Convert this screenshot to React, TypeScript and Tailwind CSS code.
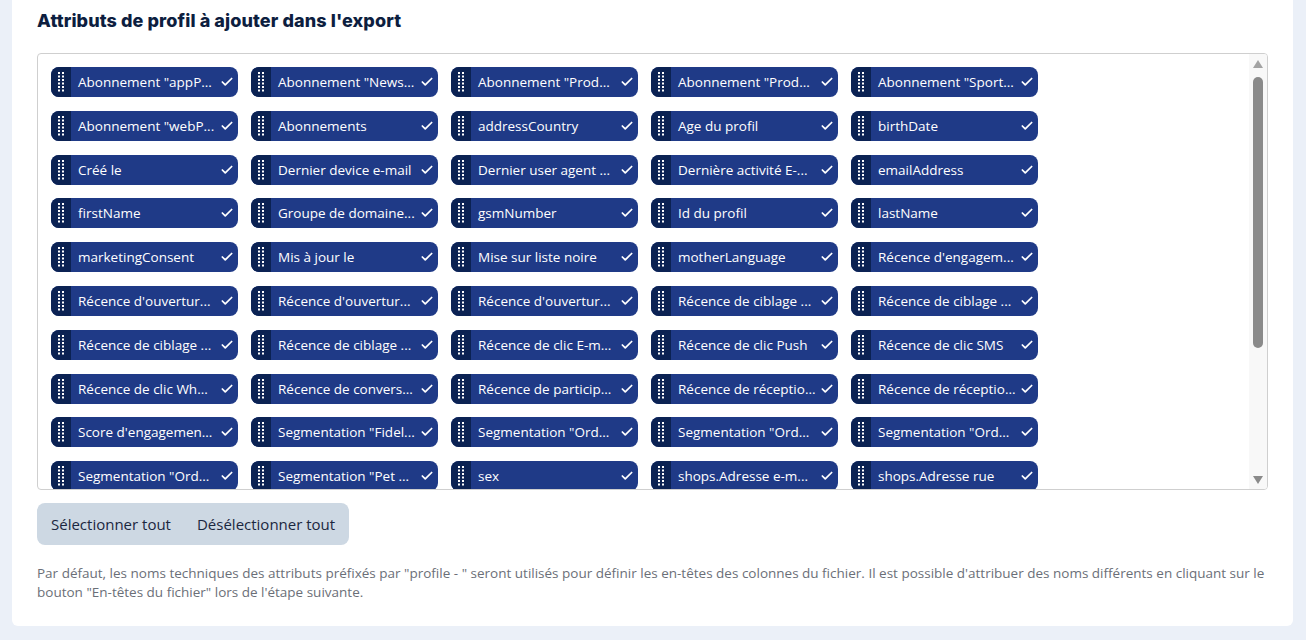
import { Check } from "lucide-react";

const rows: string[][] = [
  ['Abonnement "appP...', 'Abonnement "News...', 'Abonnement "Prod...', 'Abonnement "Prod...', 'Abonnement "Sport...'],
  ['Abonnement "webP...', "Abonnements", "addressCountry", "Age du profil", "birthDate"],
  ["Créé le", "Dernier device e-mail", "Dernier user agent ...", "Dernière activité E-...", "emailAddress"],
  ["firstName", "Groupe de domaine...", "gsmNumber", "Id du profil", "lastName"],
  ["marketingConsent", "Mis à jour le", "Mise sur liste noire", "motherLanguage", "Récence d'engagem..."],
  ["Récence d'ouvertur...", "Récence d'ouvertur...", "Récence d'ouvertur...", "Récence de ciblage ...", "Récence de ciblage ..."],
  ["Récence de ciblage ...", "Récence de ciblage ...", "Récence de clic E-m...", "Récence de clic Push", "Récence de clic SMS"],
  ["Récence de clic Wh...", "Récence de convers...", "Récence de particip...", "Récence de réceptio...", "Récence de réceptio..."],
  ["Score d'engagemen...", 'Segmentation "Fidel...', 'Segmentation "Ord...', 'Segmentation "Ord...', 'Segmentation "Ord...'],
  ['Segmentation "Ord...', 'Segmentation "Pet ...', "sex", "shops.Adresse e-m...", "shops.Adresse rue"],
];

function Grip() {
  const ys = [0, 3.5, 7, 10.5, 14, 17.5];
  return (
    <svg width="6" height="20" viewBox="0 0 6 20" className="shrink-0">
      {ys.map(y => (
        <g key={y} fill="#ffffff">
          <rect x="0" y={y} width="2" height="2" />
          <rect x="4" y={y} width="2" height="2" />
        </g>
      ))}
    </svg>
  );
}

function Chip({ label }: { label: string }) {
  return (
    <div className="flex h-[30px] w-[187px] overflow-hidden rounded-[8px] bg-[#1f3a87] text-white">
      <div className="flex w-[20px] shrink-0 items-center justify-center bg-[#0b2253]">
        <Grip />
      </div>
      <span className="flex-1 truncate pl-[7px] text-[13.5px] leading-[30px]">{label}</span>
      <div className="flex w-[20px] shrink-0 items-center justify-center pr-[3px]">
        <Check size={14} strokeWidth={3} />
      </div>
    </div>
  );
}

export default function App() {
  return (
    <div className="min-h-[640px] bg-[#ebf0f8] px-[12px] pb-[13px]" style={{ fontFamily: '"Open Sans", "Noto Sans", sans-serif' }}>
      <div className="w-[1281px] rounded-b-[6px] bg-white px-[25px] pt-[10px] pb-[24px]">
        <h2 className="text-[18px] font-extrabold leading-[22px] tracking-[0.1px] text-[#0d1e3f]" style={{ fontFamily: 'Inter, "Noto Sans", sans-serif' }}>
          Attributs de profil à ajouter dans l'export
        </h2>

        <div className="mt-[21px] flex h-[437px] overflow-hidden rounded-[4px] border border-[#cfcfcf]">
          <div className="flex flex-1 flex-col gap-[13.8px] overflow-hidden pl-[13px] pt-[13px]">
            {rows.map((r, i) => (
              <div key={i} className="flex gap-[13px]">
                {r.map((l, j) => <Chip key={j} label={l} />)}
              </div>
            ))}
          </div>
          {/* scrollbar */}
          <div className="flex w-[18px] shrink-0 flex-col items-center bg-[#f8f8f8] pt-[6px] pb-[5px]">
            <svg width="10" height="8" viewBox="0 0 10 8"><path d="M5 0 L10 8 L0 8 Z" fill="#a3a3a3" /></svg>
            <div className="mt-[9px] h-[271px] w-[10px] rounded-full bg-[#8a8a8a]" />
            <div className="flex-1" />
            <svg width="10" height="8" viewBox="0 0 10 8"><path d="M0 0 L10 0 L5 8 Z" fill="#8a8a8a" /></svg>
          </div>
        </div>

        <div className="mt-[13px] inline-flex h-[42px] items-center gap-[26px] rounded-[8px] bg-[#cdd8e3] px-[14px] text-[15px] text-[#1b2740]">
          <button>Sélectionner tout</button>
          <button>Désélectionner tout</button>
        </div>

        <p className="mt-[19px] text-[13.5px] leading-[19px] text-[#6b6f78]">
          Par défaut, les noms techniques des attributs préfixés par "profile - " seront utilisés pour définir les en-têtes des colonnes du fichier. Il est possible d'attribuer des noms différents en cliquant sur le bouton "En-têtes du fichier" lors de l'étape suivante.
        </p>
      </div>
    </div>
  );
}
